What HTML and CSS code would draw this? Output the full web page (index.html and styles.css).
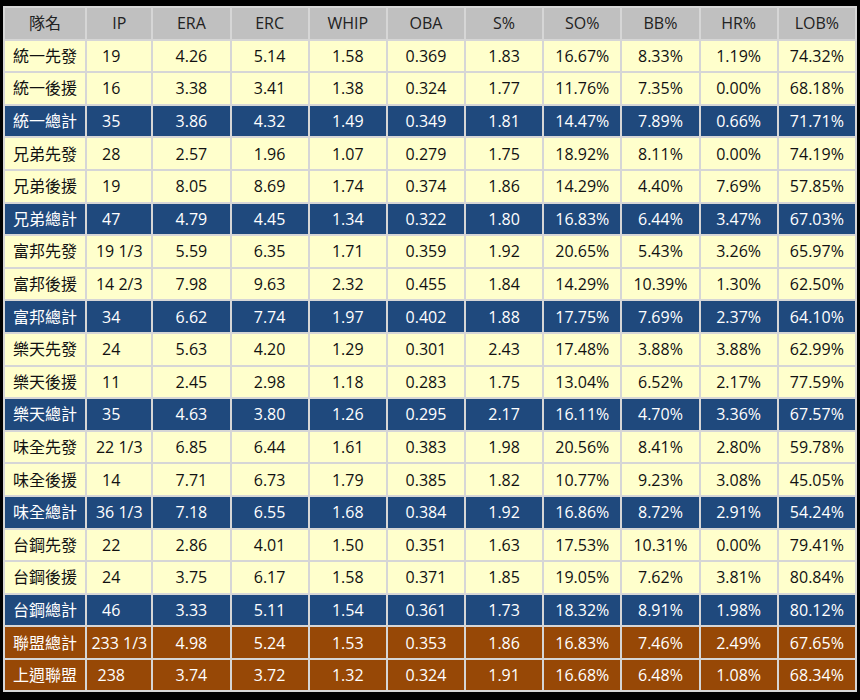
FILE: index.html
```html
<!DOCTYPE html>
<html lang="zh-Hant">
<head>
<meta charset="utf-8">
<title>投手數據</title>
<link rel="stylesheet" href="styles.css">
</head>
<body>
<table class="stats">
  <colgroup>
    <col class="c-name"><col class="c-ip"><col class="c-n"><col class="c-n"><col class="c-n"><col class="c-n"><col class="c-n"><col class="c-n"><col class="c-n"><col class="c-n"><col class="c-n">
  </colgroup>
  <thead>
    <tr class="head"><th>隊名</th><th>IP</th><th>ERA</th><th>ERC</th><th>WHIP</th><th>OBA</th><th>S%</th><th>SO%</th><th>BB%</th><th>HR%</th><th>LOB%</th></tr>
  </thead>
  <tbody>
    <tr class="y"><td>統一先發</td><td><span class="int">19</span></td><td>4.26</td><td>5.14</td><td>1.58</td><td>0.369</td><td>1.83</td><td>16.67%</td><td>8.33%</td><td>1.19%</td><td>74.32%</td></tr>
    <tr class="y"><td>統一後援</td><td><span class="int">16</span></td><td>3.38</td><td>3.41</td><td>1.38</td><td>0.324</td><td>1.77</td><td>11.76%</td><td>7.35%</td><td>0.00%</td><td>68.18%</td></tr>
    <tr class="b"><td>統一總計</td><td><span class="int">35</span></td><td>3.86</td><td>4.32</td><td>1.49</td><td>0.349</td><td>1.81</td><td>14.47%</td><td>7.89%</td><td>0.66%</td><td>71.71%</td></tr>
    <tr class="y"><td>兄弟先發</td><td><span class="int">28</span></td><td>2.57</td><td>1.96</td><td>1.07</td><td>0.279</td><td>1.75</td><td>18.92%</td><td>8.11%</td><td>0.00%</td><td>74.19%</td></tr>
    <tr class="y"><td>兄弟後援</td><td><span class="int">19</span></td><td>8.05</td><td>8.69</td><td>1.74</td><td>0.374</td><td>1.86</td><td>14.29%</td><td>4.40%</td><td>7.69%</td><td>57.85%</td></tr>
    <tr class="b"><td>兄弟總計</td><td><span class="int">47</span></td><td>4.79</td><td>4.45</td><td>1.34</td><td>0.322</td><td>1.80</td><td>16.83%</td><td>6.44%</td><td>3.47%</td><td>67.03%</td></tr>
    <tr class="y"><td>富邦先發</td><td>19 1/3</td><td>5.59</td><td>6.35</td><td>1.71</td><td>0.359</td><td>1.92</td><td>20.65%</td><td>5.43%</td><td>3.26%</td><td>65.97%</td></tr>
    <tr class="y"><td>富邦後援</td><td>14 2/3</td><td>7.98</td><td>9.63</td><td>2.32</td><td>0.455</td><td>1.84</td><td>14.29%</td><td>10.39%</td><td>1.30%</td><td>62.50%</td></tr>
    <tr class="b"><td>富邦總計</td><td><span class="int">34</span></td><td>6.62</td><td>7.74</td><td>1.97</td><td>0.402</td><td>1.88</td><td>17.75%</td><td>7.69%</td><td>2.37%</td><td>64.10%</td></tr>
    <tr class="y"><td>樂天先發</td><td><span class="int">24</span></td><td>5.63</td><td>4.20</td><td>1.29</td><td>0.301</td><td>2.43</td><td>17.48%</td><td>3.88%</td><td>3.88%</td><td>62.99%</td></tr>
    <tr class="y"><td>樂天後援</td><td><span class="int">11</span></td><td>2.45</td><td>2.98</td><td>1.18</td><td>0.283</td><td>1.75</td><td>13.04%</td><td>6.52%</td><td>2.17%</td><td>77.59%</td></tr>
    <tr class="b"><td>樂天總計</td><td><span class="int">35</span></td><td>4.63</td><td>3.80</td><td>1.26</td><td>0.295</td><td>2.17</td><td>16.11%</td><td>4.70%</td><td>3.36%</td><td>67.57%</td></tr>
    <tr class="y"><td>味全先發</td><td>22 1/3</td><td>6.85</td><td>6.44</td><td>1.61</td><td>0.383</td><td>1.98</td><td>20.56%</td><td>8.41%</td><td>2.80%</td><td>59.78%</td></tr>
    <tr class="y"><td>味全後援</td><td><span class="int">14</span></td><td>7.71</td><td>6.73</td><td>1.79</td><td>0.385</td><td>1.82</td><td>10.77%</td><td>9.23%</td><td>3.08%</td><td>45.05%</td></tr>
    <tr class="b"><td>味全總計</td><td>36 1/3</td><td>7.18</td><td>6.55</td><td>1.68</td><td>0.384</td><td>1.92</td><td>16.86%</td><td>8.72%</td><td>2.91%</td><td>54.24%</td></tr>
    <tr class="y"><td>台鋼先發</td><td><span class="int">22</span></td><td>2.86</td><td>4.01</td><td>1.50</td><td>0.351</td><td>1.63</td><td>17.53%</td><td>10.31%</td><td>0.00%</td><td>79.41%</td></tr>
    <tr class="y"><td>台鋼後援</td><td><span class="int">24</span></td><td>3.75</td><td>6.17</td><td>1.58</td><td>0.371</td><td>1.85</td><td>19.05%</td><td>7.62%</td><td>3.81%</td><td>80.84%</td></tr>
    <tr class="b"><td>台鋼總計</td><td><span class="int">46</span></td><td>3.33</td><td>5.11</td><td>1.54</td><td>0.361</td><td>1.73</td><td>18.32%</td><td>8.91%</td><td>1.98%</td><td>80.12%</td></tr>
    <tr class="o"><td>聯盟總計</td><td>233 1/3</td><td>4.98</td><td>5.24</td><td>1.53</td><td>0.353</td><td>1.86</td><td>16.83%</td><td>7.46%</td><td>2.49%</td><td>67.65%</td></tr>
    <tr class="o"><td>上週聯盟</td><td><span class="int">238</span></td><td>3.74</td><td>3.72</td><td>1.32</td><td>0.324</td><td>1.91</td><td>16.68%</td><td>6.48%</td><td>1.08%</td><td>68.34%</td></tr>
  </tbody>
</table>
</body>
</html>
```
FILE: styles.css
```css
html, body {
  background: #000;
}
body {
  margin: 0;
  padding: 6px 0 0 3px;
  font-family: "Open Sans", "Noto Sans CJK TC", sans-serif;
  font-size: 16px;
}
.stats {
  table-layout: fixed;
  border-collapse: separate;
  border-spacing: 2px;
  background: #d6d6d6;
  width: 854px;
}
.c-name { width: 80px; }
.c-ip { width: 64px; }
.c-n { width: 76px; }
.stats th,
.stats td {
  padding: 0;
  height: 30.6px;
  text-align: center;
  vertical-align: middle;
  white-space: nowrap;
  font-weight: normal;
  line-height: 20px;
}
.head th {
  background: #c0c0c0;
  color: #222;
}
.y td {
  background: #ffffcc;
  color: #111;
}
.b td {
  background: #1f497d;
  color: #fff;
}
.o td {
  background: #974806;
  color: #fff;
}
.int {
  padding-right: 16px;
}
```
